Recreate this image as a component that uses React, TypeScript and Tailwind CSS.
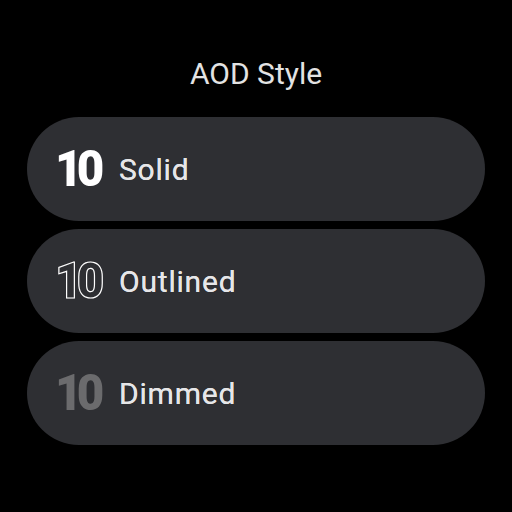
import React from 'react';

type Variant = 'solid' | 'outlined' | 'dimmed';

const options: { label: string; variant: Variant }[] = [
  { label: 'Solid', variant: 'solid' },
  { label: 'Outlined', variant: 'outlined' },
  { label: 'Dimmed', variant: 'dimmed' },
];

function Digits({ variant }: { variant: Variant }) {
  const tone =
    variant === 'solid'
      ? 'text-white'
      : variant === 'outlined'
        ? 'text-transparent [-webkit-text-stroke:1.2px_#ffffff]'
        : 'text-[#6b6b6d]';
  return (
    <span className="w-[64px] shrink-0">
      <span
        className={`inline-block origin-left scale-x-[0.95] text-[50px] leading-none font-black tracking-[-6px] ${tone}`}
      >
        10
      </span>
    </span>
  );
}

export default function App() {
  return (
    <div className="w-[512px] h-[512px] bg-black flex flex-col items-center font-['Roboto',sans-serif]">
      <h1 className="pt-[57px] text-[30px] leading-[34px] font-normal text-[#e3e3e3]">
        AOD Style
      </h1>
      <div className="mt-[26px] flex flex-col gap-[8px]">
        {options.map((o) => (
          <div
            key={o.label}
            className="w-[458px] h-[104px] rounded-full bg-[#2e2f33] flex items-center pl-[28px]"
          >
            <Digits variant={o.variant} />
            <span className="pt-[2px] text-[30px] leading-none font-normal text-[#e6e6e8] tracking-[0.8px] [text-shadow:0_0_0.4px_#e6e6e8]">
              {o.label}
            </span>
          </div>
        ))}
      </div>
    </div>
  );
}
